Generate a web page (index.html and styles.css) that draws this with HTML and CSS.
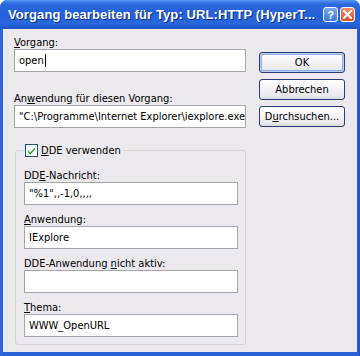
FILE: index.html
```html
<!DOCTYPE html>
<html>
<head>
<meta charset="utf-8">
<link rel="stylesheet" href="styles.css">
</head>
<body>
<div class="window">
  <div class="titlebar">
    <span class="title">Vorgang bearbeiten für Typ: URL:HTTP (HyperT...</span>
    <div class="tbtns">
      <span class="tb help">?</span>
      <span class="tb close"><svg width="9" height="9" viewBox="0 0 9 9"><path d="M1 1 L8 8 M8 1 L1 8" stroke="#fff" stroke-width="2" stroke-linecap="square"/></svg></span>
    </div>
  </div>
  <div class="client">
    <div class="top">
      <div class="fields">
        <div class="lbl"><u>V</u>organg:</div>
        <div class="input">open<span class="caret"></span></div>
        <div class="lbl gap">An<u>w</u>endung für diesen Vorgang:</div>
        <div class="input">"C:\Programme\Internet Explorer\iexplore.exe"</div>
      </div>
      <div class="buttons">
        <div class="btn default">OK</div>
        <div class="btn">Abbrechen</div>
        <div class="btn">D<u>u</u>rchsuchen...</div>
      </div>
    </div>
    <fieldset class="group">
      <legend class="legend"><span class="cb"><svg width="13" height="13" viewBox="0 0 13 13"><rect x="0.5" y="0.5" width="12" height="12" fill="#fcfcfb" stroke="#1c5180"/><path d="M3 6 L5.3 8.5 L10 3.5 L10 5.5 L5.3 10.5 L3 8 Z" fill="#21a121"/></svg></span><span><u>D</u>DE verwenden</span></legend>
      <div class="lbl first">DD<u>E</u>-Nachricht:</div>
      <div class="input">"%1",,-1,0,,,,</div>
      <div class="lbl sub"><u>A</u>nwendung:</div>
      <div class="input">IExplore</div>
      <div class="lbl sub">DDE-Anwendung <u>n</u>icht aktiv:</div>
      <div class="input"></div>
      <div class="lbl sub"><u>T</u>hema:</div>
      <div class="input">WWW_OpenURL</div>
    </fieldset>
  </div>
</div>
</body>
</html>
```
FILE: styles.css
```css
html, body {
  margin: 0;
  padding: 0;
  background: #ffffff;
}
.window {
  width: 360px;
  height: 356px;
  box-sizing: border-box;
  background: linear-gradient(90deg, #1d4fc4 0, #3a75e2 1px, #2a62d6 2px, #2a62d6 358px, #1d4fc4 360px);
  border-radius: 7px 7px 0 0;
  display: flex;
  flex-direction: column;
  font-family: "DejaVu Sans Condensed", "Liberation Sans", sans-serif;
  font-stretch: condensed;
  font-size: 11px;
  color: #000;
  overflow: hidden;
}
.titlebar {
  height: 29px;
  flex: none;
  display: flex;
  align-items: center;
  justify-content: space-between;
  padding: 0 5px 0 8px;
  background: linear-gradient(#5a9af5 0, #3b7eeb 2px, #2a66dc 5px, #2460d8 50%, #2a68dd 80%, #1f55c8 100%);
  border-radius: 7px 7px 0 0;
}
.title {
  font-family: "Liberation Sans", sans-serif;
  font-stretch: normal;
  font-weight: bold;
  font-size: 13px;
  color: #fff;
  text-shadow: 1px 1px 0 #0b2f8c;
  white-space: nowrap;
  letter-spacing: 0.1px;
}
.tbtns {
  display: flex;
  gap: 2px;
  margin-top: 0px;
}
.tb {
  width: 15px;
  height: 15px;
  box-sizing: border-box;
  border: 1px solid #fff;
  border-radius: 3px;
  display: flex;
  align-items: center;
  justify-content: center;
  color: #fff;
  font-family: "Liberation Sans", sans-serif;
  font-weight: bold;
  font-size: 11px;
}
.help {
  background: linear-gradient(#7aa8f5, #3a78e6);
}
.close {
  background: linear-gradient(#f0906a, #d9502a);
}
.client {
  flex: 1;
  margin: 0 3px 4px 3px;
  background: #ebe9ed;
  padding: 7px 12px 0 11px;
  box-sizing: border-box;
}
.top {
  display: grid;
  grid-template-columns: 232px 86px;
  column-gap: 13px;
}
.fields {
  display: flex;
  flex-direction: column;
}
.lbl {
  height: 13px;
  line-height: 13px;
  white-space: nowrap;
}
.lbl.gap {
  margin-top: 20px;
}
.lbl.first {
  margin-top: 0;
}
.lbl.sub {
  margin-top: 8px;
}
.input {
  height: 23px;
  box-sizing: border-box;
  border: 1px solid #a3a6ab;
  background: #fff;
  padding: 0 4px;
  line-height: 21px;
  white-space: nowrap;
  overflow: hidden;
  display: flex;
  align-items: center;
}
.caret {
  display: inline-block;
  width: 1px;
  height: 13px;
  background: #000;
  margin-left: 1px;
}
.buttons {
  display: flex;
  flex-direction: column;
  gap: 6px;
  padding-top: 16px;
}
.btn {
  height: 21px;
  box-sizing: border-box;
  border: 1px solid #2a3f7a;
  border-radius: 3px;
  background: linear-gradient(#ffffff 0, #f6f5f8 40%, #e9e8ee 85%, #d8d7df 100%);
  display: flex;
  align-items: center;
  justify-content: center;
  white-space: nowrap;
}
.btn.default {
  box-shadow: inset 0 0 0 1px #b8cff5, inset 0 0 0 2px #8fb0ea;
}
.group {
  margin: 16px 0 0 1px;
  width: 231px;
  box-sizing: border-box;
  border: 1px solid #d3d1d6;
  border-radius: 3px;
  padding: 12px 7px 7px 8px;
}
.legend {
  padding: 0 2px 0 1px;
  display: flex;
  align-items: center;
  height: 13px;
  line-height: 13px;
}
.cb {
  display: inline-flex;
  width: 13px;
  height: 13px;
  margin-right: 3px;
}
```
